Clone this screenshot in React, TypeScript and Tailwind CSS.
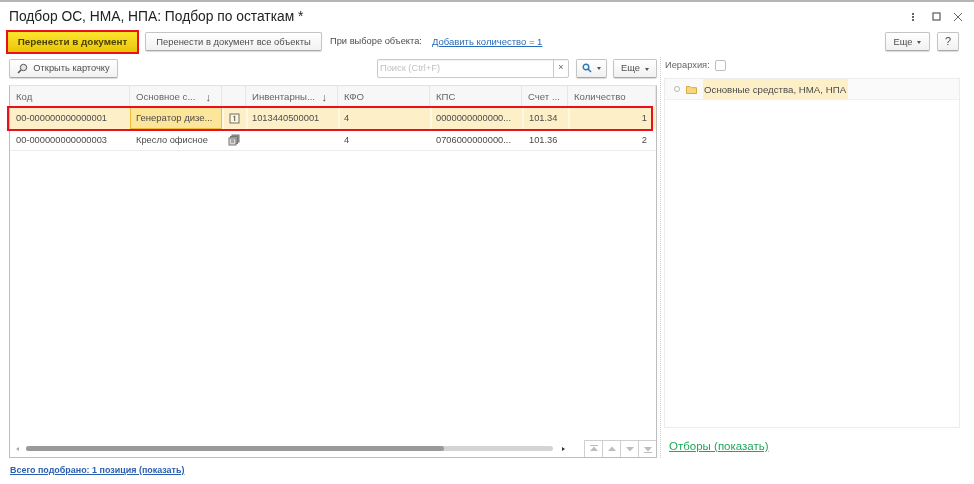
import React from "react";

const font = { fontFamily: '"Liberation Sans", Arial, sans-serif' };

function Btn({ children, className = "" }: { children: React.ReactNode; className?: string }) {
  return (
    <div
      className={
        "flex items-center justify-center rounded-[2px] border border-[#c4c4c4] border-b-[#a8a8a8] bg-gradient-to-b from-white to-[#f1f1f1] pt-[2px] text-[#4d4d4d] shadow-[0_1px_1px_rgba(0,0,0,0.15)] " +
        className
      }
    >
      {children}
    </div>
  );
}

const Caret = () => (
  <span className="ml-[5px] inline-block h-0 w-0 border-x-[2.5px] border-t-[3px] border-x-transparent border-t-[#555]" />
);

const cols = [
  { w: "w-[120px]" },
  { w: "w-[92px]" },
  { w: "w-[24px]" },
  { w: "w-[92px]" },
  { w: "w-[92px]" },
  { w: "w-[92px]" },
  { w: "w-[46px]" },
  { w: "flex-1" },
];

const headers = ["Код", "Основное с...", "", "Инвентарны...", "КФО", "КПС", "Счет ...", "Количество"];

const Card1 = () => (
  <svg width="11" height="11" viewBox="0 0 11 11">
    <rect x="1" y="1" width="9" height="9" fill="#fff6d8" stroke="#6f6f6f" />
    <path d="M4.400 3.800 5.700 3v5" stroke="#555" fill="none" />
  </svg>
);

const CardMany = () => (
  <svg width="12" height="12" viewBox="0 0 12 12">
    <rect x="4" y="1" width="7" height="7" fill="#9a9a9a" stroke="#777" />
    <rect x="2.500" y="2.500" width="7" height="7" fill="#b4b4b4" stroke="#777" />
    <rect x="1" y="4" width="7" height="7" fill="#d8d8d8" stroke="#777" />
    <path d="M3 6h3M3 8h3" stroke="#777" />
  </svg>
);

const Cell = ({ i, children, className = "" }: { i: number; children?: React.ReactNode; className?: string }) => (
  <div className={"flex shrink-0 items-center overflow-hidden whitespace-nowrap px-[6px] pt-[2px] " + cols[i].w + " " + className}>
    {children}
  </div>
);

const sep = "shadow-[inset_2px_0_rgba(255,255,255,0.5)]";

const Row1 = () => (
  <div className="flex h-[22px] shrink-0 bg-[#fdf0c8] text-[#4a4a4a]">
    <Cell i={0}>00-000000000000001</Cell>
    <div className="flex w-[92px] shrink-0 items-center whitespace-nowrap border border-[#f0bd3a] bg-[#fde59a] px-[5px] pt-[1px] text-[9.5px]">Генератор дизе...</div>
    <Cell i={2} className={"justify-center !px-0 !pt-0 " + sep}><Card1 /></Cell>
    <Cell i={3} className={sep}>1013440500001</Cell>
    <Cell i={4} className={sep}>4</Cell>
    <Cell i={5} className={sep}>0000000000000...</Cell>
    <Cell i={6} className={"!pl-[7px] " + sep}>101.34</Cell>
    <Cell i={7} className={"justify-end !pr-[9px] " + sep}>1</Cell>
  </div>
);

const Row2 = () => (
  <div className="flex h-[22px] shrink-0 border-b border-[#ececec] text-[#4a4a4a]">
    <Cell i={0}>00-000000000000003</Cell>
    <Cell i={1}>Кресло офисное</Cell>
    <Cell i={2} className="justify-center !px-0 !pt-0"><CardMany /></Cell>
    <Cell i={3} />
    <Cell i={4}>4</Cell>
    <Cell i={5}>0706000000000...</Cell>
    <Cell i={6} className="!pl-[7px]">101.36</Cell>
    <Cell i={7} className="justify-end !pr-[9px]">2</Cell>
  </div>
);

const NavBtn = ({ dir, bar }: { dir: "up" | "down"; bar?: boolean }) => (
  <div className="flex h-[17px] w-[18px] items-center justify-center border-l border-t border-[#cfcfcf] bg-white">
    <svg width="10" height="8" viewBox="0 0 10 8">
      {dir === "up" ? <path d="M5 1.500 9 6H1z" fill="#bdbdbd" /> : <path d="M5 6.500 1 2h8z" fill="#bdbdbd" />}
      {bar && <rect x="1" y={dir === "up" ? 0 : 7} width="8" height="1" fill="#bdbdbd" />}
    </svg>
  </div>
);

export default function App() {
  return (
    <div style={font} className="flex h-[484px] w-[974px] flex-col overflow-hidden border-t-2 border-[#b5b5b5] bg-white text-[9.3px] text-[#4d4d4d] [filter:blur(0.3px)]">
      {/* Title */}
      <div className="flex h-[29px] shrink-0 items-center justify-between pl-[9px] pr-[11px]">
        <div className="pt-[1px] text-[13.8px] text-[#222]">Подбор ОС, НМА, НПА: Подбор по остаткам *</div>
        <div className="flex items-center text-[#666]">
          <svg width="4" height="10" viewBox="0 0 4 10"><path d="M1 1h2v2H1zM1 4h2v2H1zM1 7h2v2H1z" fill="#666" /></svg>
          <svg className="ml-[17px]" width="9" height="9" viewBox="0 0 9 9"><rect x="1" y="1" width="7" height="7" fill="none" stroke="#666" strokeWidth="1.3" /></svg>
          <svg className="ml-[12px]" width="10" height="10" viewBox="0 0 10 10"><path d="M1 1l8 8M9 1 1 9" stroke="#666" /></svg>
        </div>
      </div>

      {/* Command bar */}
      <div className="flex h-[21px] shrink-0 items-center pl-[8px] pr-[15px]">
        <div className="flex h-[20px] w-[129px] items-center justify-center bg-gradient-to-b from-[#fbe62c] to-[#ecc400] pt-[1px] text-[9.9px] font-bold text-[#4b4200] outline-2 outline-[#e8101a]">
          Перенести в документ
        </div>
        <Btn className="ml-[8px] h-[19px] w-[177px] text-[9.4px]">Перенести в документ все объекты</Btn>
        <span className="ml-[8px] pt-[1px]">При выборе объекта:</span>
        <span className="ml-[10px] pt-[1px] text-[9.5px] text-[#2a6bb8] underline">Добавить количество = 1</span>
        <Btn className="ml-auto h-[19px] w-[45px]">Еще<Caret /></Btn>
        <Btn className="ml-[7px] h-[19px] w-[22px] !pt-0 text-[11px]">?</Btn>
      </div>

      {/* Body */}
      <div className="mb-[3px] mt-[5px] flex min-h-0 flex-1">
        <div className="flex w-[660px] shrink-0 flex-col pl-[9px]">
          <div className="flex h-[22px] shrink-0 items-center pr-[3px]">
            <Btn className="h-[19px] w-[109px] gap-[5px]">
              <svg className="-mt-[2px]" width="11" height="11" viewBox="0 0 11 11">
                <circle cx="6.500" cy="4.500" r="3.200" fill="#e4e4e4" stroke="#555" />
                <path d="M4 7 1 10" stroke="#555" strokeWidth="1.6" />
              </svg>
              Открыть карточку
            </Btn>
            <div className="ml-[259px] flex h-[19px] w-[192px] items-center rounded-[2px] border border-[#c9c9c9] bg-white shadow-[inset_0_1px_1px_rgba(0,0,0,0.06)]">
              <span className="flex-1 pl-[2px] pt-[1px] text-[#c2c2c2]">Поиск (Ctrl+F)</span>
              <span className="flex h-full w-[15px] items-center justify-center border-l border-[#c9c9c9] text-[9px] text-[#666]">×</span>
            </div>
            <Btn className="ml-[7px] h-[19px] w-[31px] !pt-0">
              <svg width="10" height="10" viewBox="0 0 10 10">
                <circle cx="4" cy="4" r="2.800" fill="none" stroke="#2c78b8" strokeWidth="1.4" />
                <path d="M6 6l3 3" stroke="#2c78b8" strokeWidth="1.6" />
              </svg>
              <Caret />
            </Btn>
            <Btn className="ml-[6px] h-[19px] w-[44px]">Еще<Caret /></Btn>
          </div>

          <div className="relative mt-[6px] flex min-h-0 w-[648px] flex-1 flex-col border border-[#bdbdbd] border-t-[#e2e2e2]">
            <div className="flex h-[21px] shrink-0 bg-[#f7f7f7] text-[9.6px] text-[#666]">
              {headers.map((h, i) => (
                <div key={i} className={"flex shrink-0 items-center justify-between whitespace-nowrap border-r border-[#e6e6e6] px-[6px] pt-[1px] " + cols[i].w + ((i === 1 || i === 3) ? " !pr-[10px]" : "")}>
                  <span>{h}</span>
                  {(i === 1 || i === 3) && <span className="text-[11px] font-bold text-[#555]">↓</span>}
                </div>
              ))}
            </div>
            <Row1 />
            <Row2 />
            <div className="flex-1" />
            <div className="flex h-[17px] shrink-0 items-end">
              <div className="flex h-[17px] flex-1 items-center pl-[6px]">
                <span className="h-0 w-0 border-y-[2px] border-r-[3px] border-y-transparent border-r-[#aaa]" />
                <div className="ml-[7px] flex h-[5px] w-[527px] rounded-full bg-[#d4d4d4]">
                  <div className="h-full w-[418px] rounded-full bg-[#9a9a9a]" />
                </div>
                <span className="ml-[9px] h-0 w-0 border-y-[2px] border-l-[3px] border-y-transparent border-l-[#333]" />
              </div>
              <div className="flex shrink-0">
                <NavBtn dir="up" bar />
                <NavBtn dir="up" />
                <NavBtn dir="down" />
                <NavBtn dir="down" bar />
              </div>
            </div>
            <div className="pointer-events-none absolute -left-[3px] top-[20px] h-[25px] w-[646px] border-2 border-[#e8101a]" />
          </div>
        </div>

        {/* Splitter */}
        <div className="w-0 shrink-0 border-l border-dotted border-[#cfcfcf]" />

        {/* Right panel */}
        <div className="ml-[3px] flex min-h-0 w-[296px] shrink-0 flex-col">
          <div className="mb-[5px] flex h-[16px] shrink-0 items-center gap-[5px] pl-px pt-[1px] text-[#666]">
            Иерархия:
            <span className="h-[11px] w-[11px] rounded-[2px] border border-[#bdbdbd]" />
          </div>
          <div className="h-[350px] shrink-0 border border-[#ececec]">
            <div className="flex h-[21px] items-center border-b border-[#f0f0f0] bg-[#fafafa] pl-[9px]">
              <span className="h-[6px] w-[6px] rounded-full border border-[#b5b5b5] bg-white" />
              <svg className="ml-[6px]" width="11" height="9" viewBox="0 0 11 9">
                <path d="M.5 8.500v-7h3.500l1 1.200h5.500v5.800z" fill="#f6d77e" stroke="#d9a93c" />
              </svg>
              <span className="ml-[6px] flex h-full items-center bg-[#fdf0c8] pl-[1px] pr-[2px] pt-[3px] text-[9.7px] text-[#4a4a4a]">Основные средства, НМА, НПА</span>
            </div>
          </div>
          <span className="ml-[5px] mt-[10px] text-[11.5px] text-[#1fa85a] underline">Отборы (показать)</span>
        </div>
      </div>

      {/* Bottom link */}
      <div className="h-[23px] shrink-0 pl-[10px] pt-[3px] text-[8.95px] font-bold text-[#2a5fb0] underline">
        Всего подобрано: 1 позиция (показать)
      </div>
    </div>
  );
}
